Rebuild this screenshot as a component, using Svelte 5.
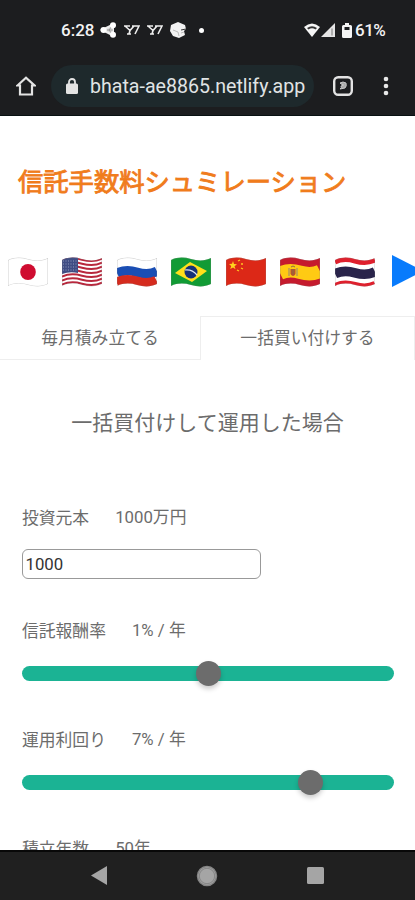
<script lang="ts">
	const flags = ['jp', 'us', 'ru', 'br', 'cn', 'es', 'th'];

	let mode = $state('lump');
	let principal = $state(1000);

	const sliders = [
		{ label: '信託報酬率', value: '1% / 年', position: 50 },
		{ label: '運用利回り', value: '7% / 年', position: 77.6 }
	];

	// one horizontal stripe that follows the waving cloth
	const wave = (y: number) => `M0 ${y + 2} C6 ${y - 1} 13 ${y - 1} 20 ${y + 1} S34 ${y + 3} 40 ${y}`;
</script>

{#snippet stripe(y: number, height: number, color: string)}
	<path d={wave(y + height / 2)} stroke={color} stroke-width={height} fill="none" />
{/snippet}

<div class="phone">
	<header>
		<div class="status">
			<span class="clock">6:28</span>
			<svg class="share" width="17" height="16" viewBox="0 0 17 16">
				<path d="M2 8 13 2.5V13.5Z" fill="#ddd" stroke="#eee" stroke-width="2" />
				<path d="M7 8h6M9 8l3-4M9 8l3 4" stroke="#888" stroke-width=".8" />
				<circle cx="3.500" cy="8" r="3" fill="#fff" />
				<circle cx="13" cy="3.300" r="3" fill="#fff" />
				<circle cx="13" cy="12.700" r="3" fill="#fff" />
			</svg>
			{#each [0, 1] as n (n)}
				<svg class="news" width="16" height="10" viewBox="0 0 16 10">
					<path d="M0 1h6M1 1l5 4.500M10 1 6 5.500 5 9M3 9h4M8 1h7l-4 8" stroke="#eee" stroke-width="1.600" fill="none" />
				</svg>
			{/each}
			<svg class="cube" width="17" height="17" viewBox="0 0 17 17">
				<path d="M8 0 15 3 16 7 14 9 15 13 9 16 3 14 0 9 1 3Z" fill="#f2f2f2" />
				<path d="M3 8l5 2 1 4M11 11l3-1" stroke="#bbb" fill="none" />
				<path d="M11 8l5-1" stroke="#333" fill="none" />
			</svg>
			<span class="dot"></span>
			<svg class="wifi" width="16" height="14" viewBox="0 0 16 14">
				<path d="M0 4Q8-3 16 4L8 14Z" fill="#f5f5f5" />
				<path d="M3 5Q8 1.500 13 5L11.500 6.500Q8 4 4.500 6.500Z" fill="#333" />
			</svg>
			<svg class="signal" width="15" height="14" viewBox="0 0 15 14">
				<path d="M0 14 14 0V14Z" fill="#e5e5e5" />
				<path d="M11 5.500v7" stroke="#777" />
			</svg>
			<svg class="battery" width="10" height="15" viewBox="0 0 10 15">
				<path d="M3 0h4v2h1.500q1.500 0 1.500 1.500v10q0 1.500-1.500 1.500h-7Q0 15 0 13.500v-10Q0 2 1.500 2H3Z" fill="#f5f5f5" />
				<path d="M2.500 4h5v3h-5z" fill="#1d1e20" />
			</svg>
			<span class="percent">61%</span>
		</div>
		<div class="toolbar">
			<svg class="home" width="20" height="20" viewBox="0 0 20 20">
				<path d="M1.500 9.500 10 1.800l8.500 7.700H16V18.500H4V9.500Z" fill="none" stroke="#e3e3e3" stroke-width="2.200" />
			</svg>
			<div class="address">
				<svg width="12" height="16" viewBox="0 0 12 16">
					<rect y="5.500" width="12" height="10.500" rx="1.500" fill="#e3e3e3" />
					<path d="M3 7V4a3 3 0 0 1 6 0v3" fill="none" stroke="#e3e3e3" stroke-width="1.800" />
				</svg>
				<span>bhata-ae8865.netlify.app</span>
			</div>
			<svg class="tab-count" width="20" height="20" viewBox="0 0 20 20">
				<rect x="1.200" y="1.200" width="17.600" height="17.600" rx="4" fill="none" stroke="#e3e3e3" stroke-width="2.400" />
				<path d="M7 7q3-2 6 0 1 3-1 5l-5 1q2-1 1-3l3-1-3-1z" fill="#aaa" stroke="#c5c5c5" />
			</svg>
			<svg class="more" width="6" height="20" viewBox="0 0 6 20">
				<circle cx="3" cy="3" r="2.300" fill="#e8e8e8" />
				<circle cx="3" cy="10" r="2.300" fill="#e8e8e8" />
				<circle cx="3" cy="17" r="2.300" fill="#e8e8e8" />
			</svg>
		</div>
	</header>

	<main>
		<h1>信託手数料シュミレーション</h1>

		<div class="flags">
			{#each flags as flag (flag)}
				<svg class="flag" width="40" height="30" viewBox="0 0 40 30">
					<defs>
						<clipPath id="cloth-{flag}">
							<path d="M0 3C6 0 13 0 20 2S34 4 40 1V27C34 30 27 30 20 28S6 26 0 29Z" />
						</clipPath>
					</defs>
					<g clip-path="url(#cloth-{flag})">
						{#if flag === 'jp'}
							<rect width="40" height="30" fill="#fff" />
							<ellipse cx="20" cy="15" rx="7.800" ry="8" fill="#cf0c30" />
						{:else if flag === 'us'}
							<rect width="40" height="30" fill="#fff" />
							{#each [0, 1, 2, 3, 4, 5, 6] as i}
								{@render stripe(0.6 + i * 4, 2.1, '#b8283d')}
							{/each}
							<path d="M0 0H16V16Q8 14 0 17Z" fill="#3f4d84" />
							{#each [4, 7, 10, 13] as y}
								<path d="M1 {y}H15" stroke="#a7b0cc" stroke-width=".8" stroke-dasharray="1 1.500" />
							{/each}
						{:else if flag === 'ru'}
							<rect width="40" height="30" fill="#fff" />
							{@render stripe(9.5, 9.5, '#1a4eb4')}
							{@render stripe(18.5, 12, '#d52b1e')}
						{:else if flag === 'br'}
							<rect width="40" height="30" fill="#119b35" />
							<path d="M4 16 19 5 36 14 21 25Z" fill="#ffe01b" />
							<circle cx="20" cy="15" r="6.500" fill="#173277" />
							<path d="M14 13q7-1 12 5" fill="none" stroke="#dbe3ef" stroke-width="1.200" />
						{:else if flag === 'cn'}
							<rect width="40" height="30" fill="#dc2817" />
							<path d="M7 4l1 3 3 .2-2.500 2 1 3L7 10.500 4.200 12l1-3L3 7l3-.2z" fill="#ffd21e" />
							<path d="M12 4l2-1M15 7l2 0M15 11l2 1M11 13l2 1" stroke="#ffc420" stroke-width="1.300" />
						{:else if flag === 'es'}
							<rect width="40" height="30" fill="#c51b2d" />
							{@render stripe(7.5, 13.5, '#ffca13')}
							<path d="M9 11v8M17 11v8" stroke="#ad9364" stroke-width="1.300" />
							<path d="M10.500 12h5v5q-2.500 4-5 0z" fill="#b45531" />
							<path d="M11 10q2-2 4 0M13 12v5" stroke="#887042" fill="none" />
						{:else}
							<rect width="40" height="30" fill="#fff" />
							{@render stripe(0.5, 5, '#df202d')}
							{@render stripe(10, 9.6, '#29244a')}
							{@render stripe(24, 6, '#df202d')}
						{/if}
						<path d="M0 3C6 0 13 0 20 2S34 4 40 1V27C34 30 27 30 20 28S6 26 0 29Z" fill="none" stroke="#888" stroke-opacity=".4" />
					</g>
				</svg>
			{/each}
			<svg class="next" width="32" height="32" viewBox="0 0 32 32">
				<path d="M0 0 31 16 0 32Z" fill="#087bfc" />
			</svg>
		</div>

		<div class="tabs">
			<button class:active={mode === 'monthly'} onclick={() => (mode = 'monthly')}>毎月積み立てる</button>
			<button class:active={mode === 'lump'} onclick={() => (mode = 'lump')}>一括買い付けする</button>
		</div>

		<h2>一括買付けして運用した場合</h2>

		<div class="form">
			<div class="label"><span>投資元本</span><span class="value">1000万円</span></div>
			<input bind:value={principal} />
			{#each sliders as slider (slider.label)}
				<div class="label"><span>{slider.label}</span><span class="value">{slider.value}</span></div>
				<div class="track">
					<span class="thumb" style="left: {slider.position}%"></span>
				</div>
			{/each}
			<div class="label"><span>積立年数</span><span class="value">50年</span></div>
		</div>
	</main>

	<nav>
		<svg width="16" height="19" viewBox="0 0 16 19"><path d="M0 9.500 16 0V19Z" fill="#a5a5a5" /></svg>
		<svg width="22" height="22" viewBox="0 0 22 22">
			<circle cx="11" cy="11" r="9.500" fill="#a5a5a5" stroke="#858585" stroke-width="1.500" />
			<circle cx="11" cy="11" r="7.700" fill="none" stroke="#777" stroke-width=".7" />
		</svg>
		<svg width="17" height="17" viewBox="0 0 17 17"><rect width="17" height="17" rx="1.500" fill="#a5a5a5" /></svg>
	</nav>
</div>

<style>
	:global(body) {
		margin: 0;
	}
	.phone {
		width: 415px;
		height: 900px;
		display: flex;
		flex-direction: column;
		overflow: hidden;
		background: #fff;
		color: #6c6c6c;
		font-family: Roboto, 'Noto Sans CJK JP', sans-serif;
	}
	svg {
		display: block;
		flex: none;
	}

	header {
		flex: none;
		box-sizing: border-box;
		height: 116px;
		padding-top: 18px;
		background: #1c1d1f;
		border-bottom: 1px solid #081112;
		color: #f3f3f3;
	}
	.status {
		display: flex;
		align-items: center;
		height: 24px;
	}
	.clock,
	.percent {
		font: 500 17px/24px Roboto, sans-serif;
	}
	.clock {
		width: 33px;
		margin-left: 61px;
	}
	.share {
		margin: 0 7px 0 6px;
	}
	.news {
		margin-right: 7px;
	}
	.cube {
		margin-right: 12px;
	}
	.dot {
		width: 5px;
		height: 5px;
		border-radius: 50%;
		background: #fff;
	}
	.wifi {
		margin-left: auto;
	}
	.signal {
		margin: 0 6px 0 1px;
	}
	.percent {
		width: 31px;
		margin: 0 29px 0 3px;
		letter-spacing: -0.5px;
	}
	.toolbar {
		display: flex;
		align-items: center;
		height: 42px;
		margin-top: 23px;
	}
	.home {
		margin: 0 15px 0 16px;
	}
	.address {
		box-sizing: border-box;
		display: flex;
		align-items: center;
		gap: 12px;
		width: 263px;
		height: 42px;
		padding-left: 15px;
		border-radius: 21px;
		background: #1e292c;
		color: #e0e4e5;
		font-size: 19.6px;
		white-space: nowrap;
	}
	.tab-count {
		margin: 0 30px 0 19px;
	}

	main {
		flex: 1;
		min-height: 0;
		overflow: hidden;
	}
	h1 {
		margin: 45px 0 0 18px;
		font-family: 'Noto Sans CJK JP', sans-serif;
		font-size: 25.300px;
		font-weight: 400;
		line-height: 38px;
		color: #f07c1c;
		-webkit-text-stroke: 0.9px #f07c1c;
	}
	.flags {
		display: flex;
		align-items: center;
		gap: 14.600px;
		height: 32px;
		margin-top: 57px;
		padding-left: 7.500px;
	}
	.next {
		margin: -2px 0 0 2px;
	}
	.tabs {
		display: flex;
		height: 44px;
		margin-top: 28px;
	}
	button {
		box-sizing: border-box;
		width: 200px;
		padding: 0 0 1px;
		border: solid #eee;
		border-width: 0 0 1px;
		background: none;
		color: #6c6c6c;
		font: 16.800px 'Noto Sans CJK JP', sans-serif;
	}
	button + button {
		width: 215px;
	}
	button.active {
		padding-bottom: 4px;
		border-width: 1px 1px 0;
	}
	h2 {
		margin: 45px 0 0;
		font-size: 21px;
		font-weight: 400;
		line-height: 32px;
		text-align: center;
		font-family: 'Noto Sans CJK JP', sans-serif;
	}
	.form {
		padding: 68px 21px 0 22px;
	}
	.label {
		display: flex;
		gap: 26px;
		height: 24px;
		font: 16.800px/24px 'Noto Sans CJK JP', sans-serif;
	}
	.value {
		font-family: Roboto, 'Noto Sans CJK JP', sans-serif;
	}
	input {
		display: block;
		box-sizing: border-box;
		width: 239px;
		height: 30px;
		margin: 20px 0 39px -0.500px;
		padding: 0 3px;
		border: 1px solid #999;
		border-radius: 6px;
		outline: none;
		color: #333;
		font: 16.800px Roboto, sans-serif;
	}
	.track {
		position: relative;
		height: 15px;
		margin: 24px 0 46px;
		border-radius: 8px;
		background: #1bb394;
	}
	.thumb {
		position: absolute;
		top: -5px;
		width: 25px;
		height: 25px;
		margin-left: -12.500px;
		border-radius: 50%;
		background: #6c6c6c;
		box-shadow: 0 3px 5px rgba(0, 0, 0, 0.2);
	}

	nav {
		display: flex;
		flex: none;
		align-items: center;
		justify-content: space-between;
		box-sizing: border-box;
		height: 50px;
		padding: 0 91px 1px;
		border-top: 2px solid #080808;
		background: #202020;
	}
</style>
